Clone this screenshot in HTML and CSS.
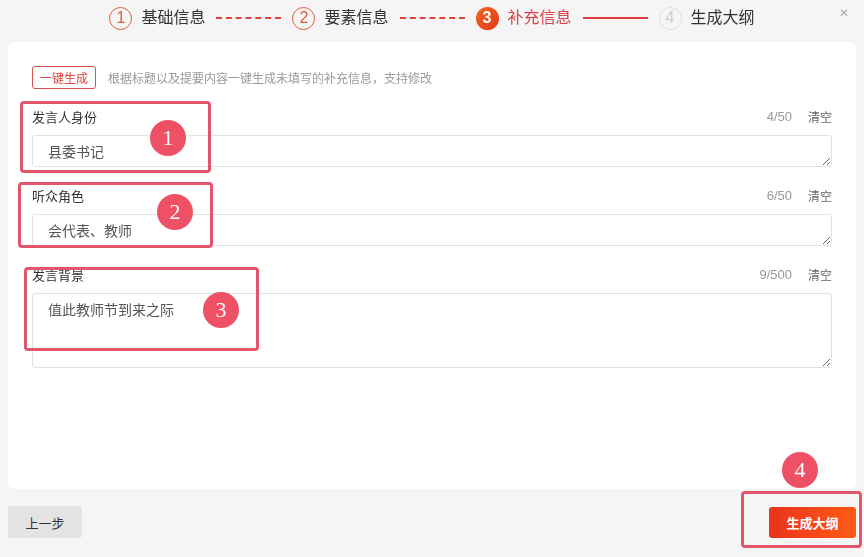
FILE: index.html
```html
<!DOCTYPE html>
<html lang="zh-CN">
<head>
    <meta charset="UTF-8">
    <title>补充信息</title>
    <link rel="stylesheet" href="styles.css">
</head>
<body>
    <div class="dialog">
        <div class="steps">
            <div class="step done"><span class="num">1</span><span class="label">基础信息</span></div>
            <span class="line dashed"></span>
            <div class="step done"><span class="num">2</span><span class="label">要素信息</span></div>
            <span class="line dashed"></span>
            <div class="step active"><span class="num">3</span><span class="label">补充信息</span></div>
            <span class="line solid"></span>
            <div class="step todo"><span class="num">4</span><span class="label">生成大纲</span></div>
            <span class="close">&#x2715;</span>
        </div>

        <div class="panel">
            <div class="quick">
                <button class="quick-btn">一键生成</button>
                <span class="quick-tip">根据标题以及提要内容一键生成未填写的补充信息，支持修改</span>
            </div>

            <div class="field">
                <div class="field-head">
                    <span class="field-name">发言人身份</span>
                    <span class="count">4/50</span>
                    <span class="clear">清空</span>
                </div>
                <textarea class="input short">县委书记</textarea>
            </div>

            <div class="field">
                <div class="field-head">
                    <span class="field-name">听众角色</span>
                    <span class="count">6/50</span>
                    <span class="clear">清空</span>
                </div>
                <textarea class="input short">会代表、教师</textarea>
            </div>

            <div class="field">
                <div class="field-head">
                    <span class="field-name">发言背景</span>
                    <span class="count">9/500</span>
                    <span class="clear">清空</span>
                </div>
                <textarea class="input tall">值此教师节到来之际</textarea>
            </div>
        </div>

        <div class="footer">
            <button class="prev-btn">上一步</button>
            <button class="next-btn">生成大纲</button>
        </div>

        <!-- annotation marks -->
        <div class="mark-box box1"></div>
        <div class="mark-dot dot1">1</div>
        <div class="mark-box box2"></div>
        <div class="mark-dot dot2">2</div>
        <div class="mark-box box3"></div>
        <div class="mark-dot dot3">3</div>
        <div class="mark-box box4"></div>
        <div class="mark-dot dot4">4</div>
    </div>
</body>
</html>
```

FILE: styles.css
```css
* {
    box-sizing: border-box;
}

body {
    margin: 0;
    background-color: #f5f5f5;
    font-family: "Liberation Sans", "Noto Sans CJK SC", sans-serif;
    color: #333;
}

.dialog {
    position: relative;
    width: 864px;
    height: 557px;
    padding: 0 8px;
}

/* steps */
.steps {
    height: 42px;
    display: flex;
    align-items: center;
    justify-content: center;
    padding-bottom: 6px;
}

.step {
    display: flex;
    align-items: center;
    gap: 9px;
}

.step .num {
    width: 23px;
    height: 23px;
    border-radius: 50%;
    display: flex;
    align-items: center;
    justify-content: center;
    font-size: 16px;
}

.step .label {
    font-size: 16px;
    line-height: 20px;
    color: #333;
}

.step.done .num {
    border: 1.5px solid #e35b3a;
    color: #e35b3a;
}

.step.active .num {
    background: linear-gradient(135deg, #f0641e, #e8371c);
    color: #fff;
    font-weight: bold;
}

.step.active .label {
    color: #d9454a;
}

.step.todo .num {
    border: 1.5px solid #ddd;
    color: #ccc;
}

.line {
    width: 65px;
    margin: 0 11px;
}

.line.dashed {
    border-top: 2px dashed #e0403c;
}

.line.solid {
    border-top: 2px solid #e0403c;
}

.close {
    position: absolute;
    right: 15px;
    top: 6px;
    font-size: 12px;
    color: #aaa;
}

/* panel */
.panel {
    background-color: #fff;
    border-radius: 6px;
    height: 447px;
    padding: 24px 24px 0 24px;
}

.quick {
    display: flex;
    align-items: center;
    gap: 12px;
}

.quick-btn {
    height: 23px;
    width: 64px;
    padding: 0;
    border: 1px solid #d9534f;
    border-radius: 3px;
    background-color: #fff;
    color: #d9453c;
    font-family: inherit;
    font-size: 12px;
}

.quick-tip {
    font-size: 12px;
    color: #999;
}

.field {
    margin-top: 17px;
}

.field + .field {
    margin-top: 18px;
}

.field-head {
    display: flex;
    align-items: center;
    height: 20px;
    margin-bottom: 9px;
}

.field-name {
    flex: 1;
    font-size: 13px;
    color: #333;
}

.count {
    font-size: 13px;
    color: #999;
}

.clear {
    font-size: 12px;
    color: #666;
    margin-left: 16px;
}

.input {
    display: block;
    width: 100%;
    border: 1px solid #e2e2e2;
    border-radius: 3px;
    padding: 7px 15px;
    font-family: inherit;
    font-size: 14px;
    line-height: 18px;
    color: #555;
    background-color: #fff;
    outline: none;
}

.input.short {
    height: 32px;
}

.input.tall {
    height: 75px;
}

/* footer */
.footer {
    display: flex;
    justify-content: space-between;
    align-items: center;
    margin-top: 17px;
}

.prev-btn {
    width: 74px;
    height: 32px;
    border: none;
    border-radius: 3px;
    background-color: #e4e4e4;
    color: #333;
    font-family: inherit;
    font-size: 13px;
}

.next-btn {
    width: 87px;
    height: 31px;
    border: none;
    border-radius: 3px;
    background: linear-gradient(90deg, #e8341c, #ff5a14);
    color: #fff;
    font-family: inherit;
    font-size: 13px;
    font-weight: bold;
}

/* annotation marks */
.mark-box {
    position: absolute;
    border: 3px solid #e2566b;
    border-radius: 4px;
}

.box1 { left: 20px; top: 101px; width: 191px; height: 72px; }
.box2 { left: 18px; top: 182px; width: 195px; height: 66px; }
.box3 { left: 24px; top: 267px; width: 235px; height: 84px; }
.box4 { left: 741px; top: 491px; width: 121px; height: 57px; }

.mark-dot {
    position: absolute;
    width: 36px;
    height: 36px;
    border-radius: 50%;
    background-color: #ee5066;
    color: #fff;
    font-family: "Liberation Serif", serif;
    font-size: 22px;
    display: flex;
    align-items: center;
    justify-content: center;
}

.dot1 { left: 150px; top: 120px; }
.dot2 { left: 157px; top: 194px; }
.dot3 { left: 203px; top: 292px; }
.dot4 { left: 782px; top: 452px; }
```
